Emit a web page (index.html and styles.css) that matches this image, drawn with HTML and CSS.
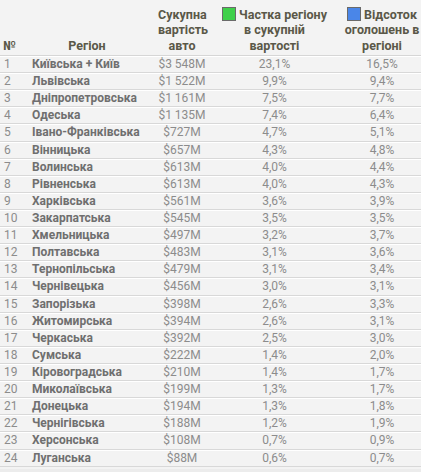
FILE: index.html
```html
<!DOCTYPE html>
<html>
<head>
  <meta charset="utf-8">
  <title>Регіони</title>
  <link rel="stylesheet" href="styles.css">
</head>
<body>
  <div class="regions">
    <div class="row head">
      <div class="num">№</div>
      <div class="region">Регіон</div>
      <div>Сукупна<br>вартість<br>авто</div>
      <div><span class="key green"></span>Частка регіону<br>в сукупній<br>вартості</div>
      <div><span class="key blue"></span>Відсоток<br>оголошень в<br>регіоні</div>
    </div>
    <div class="row"><div class="num">1</div><div class="name">Київська + Київ</div><div>$3 548M</div><div>23,1%</div><div>16,5%</div></div>
    <div class="row"><div class="num">2</div><div class="name">Львівська</div><div>$1 522M</div><div>9,9%</div><div>9,4%</div></div>
    <div class="row"><div class="num">3</div><div class="name">Дніпропетровська</div><div>$1 161M</div><div>7,5%</div><div>7,7%</div></div>
    <div class="row"><div class="num">4</div><div class="name">Одеська</div><div>$1 135M</div><div>7,4%</div><div>6,4%</div></div>
    <div class="row"><div class="num">5</div><div class="name">Івано-Франківська</div><div>$727M</div><div>4,7%</div><div>5,1%</div></div>
    <div class="row"><div class="num">6</div><div class="name">Вінницька</div><div>$657M</div><div>4,3%</div><div>4,8%</div></div>
    <div class="row"><div class="num">7</div><div class="name">Волинська</div><div>$613M</div><div>4,0%</div><div>4,4%</div></div>
    <div class="row"><div class="num">8</div><div class="name">Рівненська</div><div>$613M</div><div>4,0%</div><div>4,3%</div></div>
    <div class="row"><div class="num">9</div><div class="name">Харківська</div><div>$561M</div><div>3,6%</div><div>3,9%</div></div>
    <div class="row"><div class="num">10</div><div class="name">Закарпатська</div><div>$545M</div><div>3,5%</div><div>3,5%</div></div>
    <div class="row"><div class="num">11</div><div class="name">Хмельницька</div><div>$497M</div><div>3,2%</div><div>3,7%</div></div>
    <div class="row"><div class="num">12</div><div class="name">Полтавська</div><div>$483M</div><div>3,1%</div><div>3,6%</div></div>
    <div class="row"><div class="num">13</div><div class="name">Тернопільська</div><div>$479M</div><div>3,1%</div><div>3,4%</div></div>
    <div class="row"><div class="num">14</div><div class="name">Чернівецька</div><div>$456M</div><div>3,0%</div><div>3,1%</div></div>
    <div class="row"><div class="num">15</div><div class="name">Запорізька</div><div>$398M</div><div>2,6%</div><div>3,3%</div></div>
    <div class="row"><div class="num">16</div><div class="name">Житомирська</div><div>$394M</div><div>2,6%</div><div>3,1%</div></div>
    <div class="row"><div class="num">17</div><div class="name">Черкаська</div><div>$392M</div><div>2,5%</div><div>3,0%</div></div>
    <div class="row"><div class="num">18</div><div class="name">Сумська</div><div>$222M</div><div>1,4%</div><div>2,0%</div></div>
    <div class="row"><div class="num">19</div><div class="name">Кіровоградська</div><div>$210M</div><div>1,4%</div><div>1,7%</div></div>
    <div class="row"><div class="num">20</div><div class="name">Миколаївська</div><div>$199M</div><div>1,3%</div><div>1,7%</div></div>
    <div class="row"><div class="num">21</div><div class="name">Донецька</div><div>$194M</div><div>1,3%</div><div>1,8%</div></div>
    <div class="row"><div class="num">22</div><div class="name">Чернігівська</div><div>$188M</div><div>1,2%</div><div>1,9%</div></div>
    <div class="row"><div class="num">23</div><div class="name">Херсонська</div><div>$108M</div><div>0,7%</div><div>0,9%</div></div>
    <div class="row"><div class="num">24</div><div class="name">Луганська</div><div>$88M</div><div>0,6%</div><div>0,7%</div></div>
  </div>
</body>
</html>
```

FILE: styles.css
```css
body {
  margin: 0;
  background: #ececec;
  font-family: Roboto, "Liberation Sans", sans-serif;
}

.regions {
  width: 421px;
  background: #f3f3f3;
  padding-bottom: 2px;
}

.row {
  display: grid;
  grid-template-columns: 28px 130px 48px 137px 78px;
  align-items: center;
  box-sizing: border-box;
  height: 17.12px;
  font-size: 12px;
  line-height: 15px;
  color: #8c8c8c;
  text-align: center;
  border-top: 1px solid #ffffff;
  border-bottom: 1px solid #d8d8d8;
}

.row .num {
  text-align: left;
  padding-left: 4px;
}

.row .name {
  text-align: left;
  padding-left: 4px;
  font-weight: bold;
  color: #6f6f6f;
  white-space: nowrap;
}

.row.head {
  height: 56px;
  align-items: end;
  padding-bottom: 2px;
  border-top: none;
  border-bottom-color: #d6d6d6;
  font-size: 12.5px;
  line-height: 15.5px;
  font-weight: bold;
  color: #5a5848;
  white-space: nowrap;
}

.row.head .num {
  padding-left: 3px;
}

.row.head .region {
  padding-right: 12px;
}

.key {
  display: inline-block;
  width: 12px;
  height: 12px;
  margin-right: 3px;
  vertical-align: -2px;
  border: 1px solid #6a6a6a;
}

.key.green { background: #3fd04a; }
.key.blue { background: #4a86e8; }
```
